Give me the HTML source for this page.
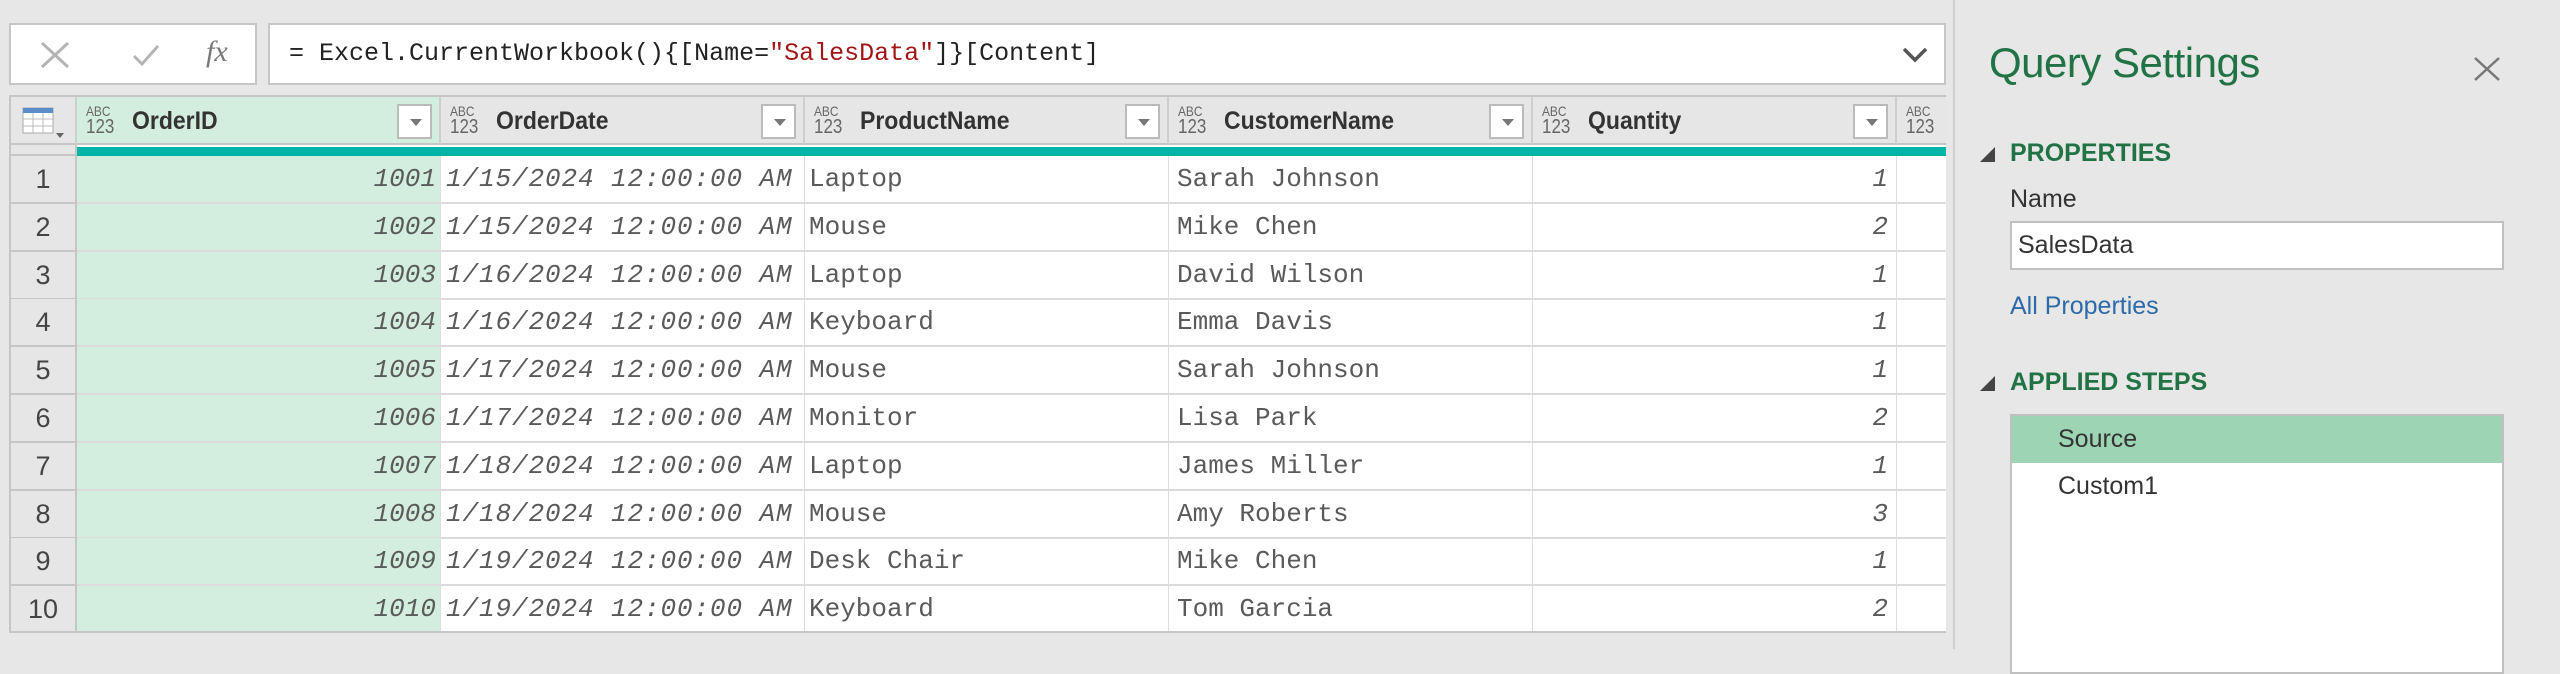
<!DOCTYPE html>
<html><head><meta charset="utf-8"><style>
*{box-sizing:border-box;margin:0;padding:0}
body{width:2560px;height:649px;background:#e6e7e6;position:relative;overflow:hidden;font-family:"Liberation Sans",sans-serif}
.abs{position:absolute}
.fxbox{left:9px;top:23px;width:248px;height:62px;background:#fff;border:2px solid #c6c6c6}
.fbar{left:268px;top:23px;width:1678px;height:62px;background:#fff;border:2px solid #c6c6c6;font-family:"Liberation Mono",monospace;font-size:25px;color:#222;line-height:58px;padding-left:19px;letter-spacing:0px}
.fbar .s{color:#a31515}
.grid{left:9px;top:95px;width:1937px;height:538px;background:#fff;border:2px solid #c6c6c6;border-right:none;overflow:hidden}
.hdr{position:absolute;top:0;height:48px;background:#e6e6e6;border-right:2px solid #cfcfcf;border-bottom:2px solid #c6c6c6}
.hdr .ic{position:absolute;left:9px;top:7px;font-size:14px;line-height:14px;color:#666;transform:scaleX(0.85);transform-origin:left}
.hdr .ic b{display:block;font-weight:normal;font-size:20px;line-height:18px}
.hdr .t{position:absolute;left:55px;top:10px;font-weight:bold;font-size:25px;color:#333;transform:scaleX(0.92);transform-origin:left}
.hdr .dd{position:absolute;right:7px;top:7px;width:35px;height:35px;background:#fff;border:2px solid #bbb}
.hdr .dd:after{content:"";position:absolute;left:11px;top:13px;border-left:6px solid transparent;border-right:6px solid transparent;border-top:7px solid #777}
.teal{position:absolute;top:50px;height:9px;background:#00b4a6}
.row{position:absolute;left:0;width:1937px;height:48px;border-bottom:2px solid #dcdcdc}
.c{position:absolute;top:0;height:46px;line-height:46px;font-family:"Liberation Mono",monospace;font-size:26px;color:#5a5a5a;white-space:nowrap;overflow:hidden;border-right:1px solid #ddd}
.i{font-style:italic;text-align:right;padding-right:4px}
.n{font-style:italic;text-align:right;padding-right:8px}
.rn{position:absolute;left:0;width:66px;height:48px;background:#e6e6e6;border-right:2px solid #c6c6c6;border-bottom:2px solid #c6c6c6;text-align:center;line-height:46px;font-size:27px;color:#444}
</style></head><body>
<div class="abs fxbox">
 <svg class="abs" style="left:28px;top:16px" width="32" height="28"><path d="M3 2 L29 26 M29 2 L3 26" stroke="#b5b5b5" stroke-width="3"/></svg>
 <svg class="abs" style="left:120px;top:18px" width="30" height="24"><path d="M3 13 L11 21 L27 3" stroke="#b5b5b5" stroke-width="3" fill="none"/></svg>
 <div class="abs" style="left:195px;top:10px;font-family:'Liberation Serif',serif;font-style:italic;font-size:30px;color:#777">fx</div>
</div>
<div class="abs fbar">= Excel.CurrentWorkbook(){[Name=<span class="s">"SalesData"</span>]}[Content]
 <svg class="abs" style="right:16px;top:22px" width="26" height="16"><path d="M2 2 L13 13 L24 2" stroke="#555" stroke-width="3.5" fill="none"/></svg>
</div>
<div class="abs grid">
 <div class="hdr" style="left:0;width:66px">
  <svg class="abs" style="left:11px;top:10px" width="44" height="32"><rect x="1" y="1" width="30" height="25" fill="#fff" stroke="#aaa"/><rect x="1" y="1" width="30" height="5" fill="#5b8ec8"/><path d="M1 12H31M1 19H31M11 6V26M21 6V26" stroke="#bbb"/><path d="M34 26 L42 26 L38 31Z" fill="#666"/></svg>
 </div>
 <div class="hdr" style="left:66px;width:364px;background:#d3eedf"><div class="ic">ABC<b>123</b></div><div class="t">OrderID</div><div class="dd"></div></div>
 <div class="hdr" style="left:430px;width:364px"><div class="ic">ABC<b>123</b></div><div class="t">OrderDate</div><div class="dd"></div></div>
 <div class="hdr" style="left:794px;width:364px"><div class="ic">ABC<b>123</b></div><div class="t">ProductName</div><div class="dd"></div></div>
 <div class="hdr" style="left:1158px;width:364px"><div class="ic">ABC<b>123</b></div><div class="t">CustomerName</div><div class="dd"></div></div>
 <div class="hdr" style="left:1522px;width:364px"><div class="ic">ABC<b>123</b></div><div class="t">Quantity</div><div class="dd"></div></div>
 <div class="hdr" style="left:1886px;width:80px"><div class="ic">ABC<b>123</b></div></div>
 <div class="rn" style="top:48px;height:11px;border-bottom:2px solid #c6c6c6"></div>
 <div class="teal" style="left:66px;width:1880px"></div>
 <div id="rows"></div>
</div>
<div class="abs" style="left:1953px;top:0;width:2px;height:649px;background:#d0d0d0"></div>
<div class="abs" style="left:1989px;top:39px;font-size:42px;color:#217346;letter-spacing:-0.5px">Query Settings</div>
<svg class="abs" style="left:2472px;top:56px" width="30" height="26"><path d="M3 2 L27 24 M27 2 L3 24" stroke="#777" stroke-width="2.5"/></svg>
<svg class="abs" style="left:1979px;top:146px" width="18" height="18"><path d="M16 1 L16 16 L1 16Z" fill="#444"/></svg>
<div class="abs" style="left:2010px;top:139px;font-size:25px;font-weight:bold;color:#217346">PROPERTIES</div>
<div class="abs" style="left:2010px;top:185px;font-size:25px;color:#333">Name</div>
<div class="abs" style="left:2010px;top:221px;width:494px;height:49px;background:#fff;border:2px solid #c0c0c0;font-size:25px;color:#333;line-height:44px;padding-left:6px">SalesData</div>
<div class="abs" style="left:2010px;top:292px;font-size:25px;color:#2e6aa8">All Properties</div>
<svg class="abs" style="left:1979px;top:375px" width="18" height="18"><path d="M16 1 L16 16 L1 16Z" fill="#444"/></svg>
<div class="abs" style="left:2010px;top:368px;font-size:25px;font-weight:bold;color:#217346">APPLIED STEPS</div>
<div class="abs" style="left:2010px;top:414px;width:494px;height:260px;background:#fff;border:2px solid #c0c0c0">
 <div style="height:47px;background:#9dd4b4;font-size:25px;color:#333;line-height:46px;padding-left:46px">Source</div>
 <div style="height:47px;font-size:25px;color:#333;line-height:46px;padding-left:46px">Custom1</div>
</div>
<script>
var d=[["1001","1/15/2024","Laptop","Sarah Johnson","1"],["1002","1/15/2024","Mouse","Mike Chen","2"],["1003","1/16/2024","Laptop","David Wilson","1"],["1004","1/16/2024","Keyboard","Emma Davis","1"],["1005","1/17/2024","Mouse","Sarah Johnson","1"],["1006","1/17/2024","Monitor","Lisa Park","2"],["1007","1/18/2024","Laptop","James Miller","1"],["1008","1/18/2024","Mouse","Amy Roberts","3"],["1009","1/19/2024","Desk Chair","Mike Chen","1"],["1010","1/19/2024","Keyboard","Tom Garcia","2"]];
var h="";
d.forEach(function(r,k){var t=59+k*47.8;
h+='<div class="row" style="top:'+t+'px"><div class="rn" style="top:0">'+(k+1)+'</div>'+
'<div class="c i" style="left:66px;width:364px;background:#d3eedf">'+r[0]+'</div>'+
'<div class="c" style="left:430px;width:364px;font-style:italic;padding-left:5px;letter-spacing:0.9px">'+r[1]+' 12:00:00 AM</div>'+
'<div class="c" style="left:794px;width:364px;padding-left:4px">'+r[2]+'</div>'+
'<div class="c" style="left:1158px;width:364px;padding-left:8px">'+r[3]+'</div>'+
'<div class="c n" style="left:1522px;width:364px">'+r[4]+'</div></div>';});
document.getElementById("rows").innerHTML=h;
</script>
</body></html>
